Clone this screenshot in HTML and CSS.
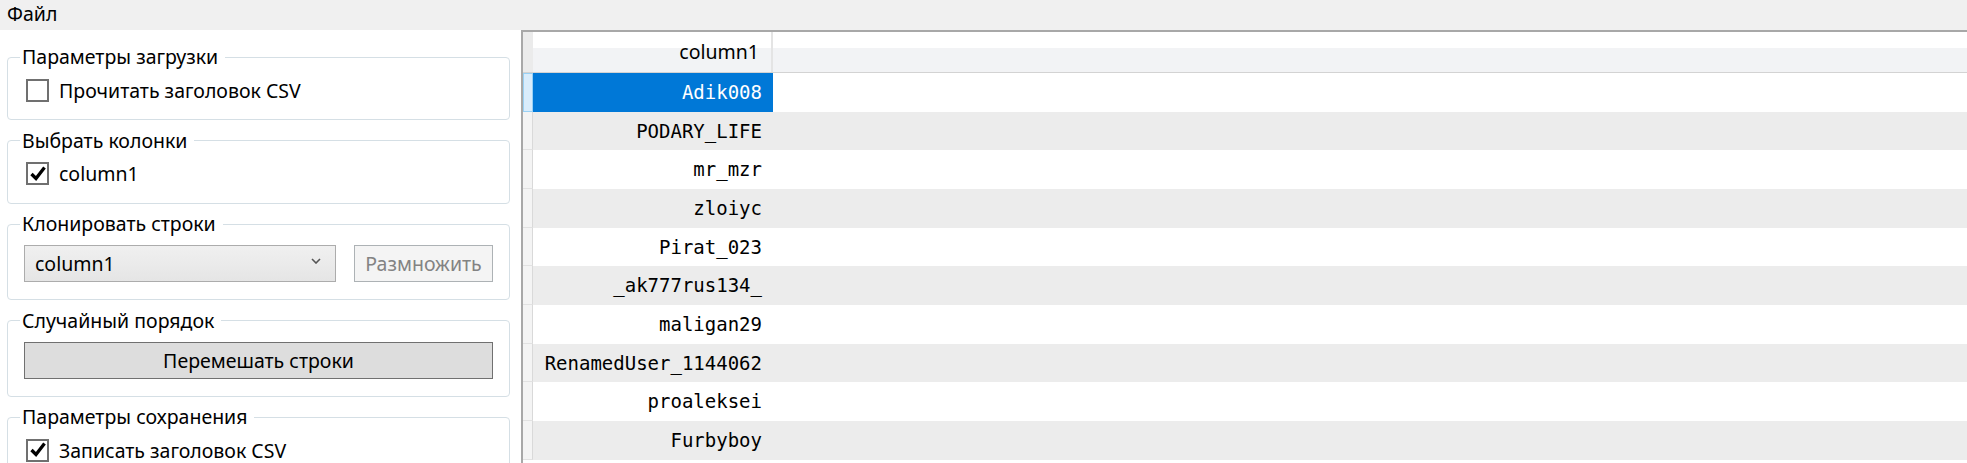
FILE: index.html
```html
<!DOCTYPE html>
<html lang="ru">
<head>
<meta charset="utf-8">
<title>CSV</title>
<link rel="stylesheet" href="styles.css">
</head>
<body>
<div class="menubar"><span class="menu-item">Файл</span></div>
<div class="main">
  <aside class="sidebar">
    <fieldset class="group">
      <legend>Параметры загрузки</legend>
      <label class="check"><span class="box"></span><span>Прочитать заголовок CSV</span></label>
    </fieldset>
    <fieldset class="group">
      <legend>Выбрать колонки</legend>
      <label class="check"><span class="box checked"><svg viewBox="0 0 18 18"><path d="M2.5 9 L7 13.5 L15.5 2.5" /></svg></span><span>column1</span></label>
    </fieldset>
    <fieldset class="group">
      <legend>Клонировать строки</legend>
      <div class="clone-row">
        <div class="combo"><span>column1</span><svg class="chev" viewBox="0 0 10 6"><path d="M1 1 L5 5 L9 1" /></svg></div>
        <button class="btn disabled" disabled>Размножить</button>
      </div>
    </fieldset>
    <fieldset class="group">
      <legend>Случайный порядок</legend>
      <button class="btn wide">Перемешать строки</button>
    </fieldset>
    <fieldset class="group">
      <legend>Параметры сохранения</legend>
      <label class="check"><span class="box checked"><svg viewBox="0 0 18 18"><path d="M2.5 9 L7 13.5 L15.5 2.5" /></svg></span><span>Записать заголовок CSV</span></label>
    </fieldset>
  </aside>
  <section class="grid">
    <div class="grid-head"><div class="corner"></div><div class="hcell">column1</div><div class="hfill"></div></div>
    <div class="row selected"><div class="rh"></div><div class="cell">Adik008</div><div class="fill"></div></div>
    <div class="row alt"><div class="rh"></div><div class="cell">PODARY_LIFE</div><div class="fill"></div></div>
    <div class="row"><div class="rh"></div><div class="cell">mr_mzr</div><div class="fill"></div></div>
    <div class="row alt"><div class="rh"></div><div class="cell">zloiyc</div><div class="fill"></div></div>
    <div class="row"><div class="rh"></div><div class="cell">Pirat_023</div><div class="fill"></div></div>
    <div class="row alt"><div class="rh"></div><div class="cell">_ak777rus134_</div><div class="fill"></div></div>
    <div class="row"><div class="rh"></div><div class="cell">maligan29</div><div class="fill"></div></div>
    <div class="row alt"><div class="rh"></div><div class="cell">RenamedUser_1144062</div><div class="fill"></div></div>
    <div class="row"><div class="rh"></div><div class="cell">proaleksei</div><div class="fill"></div></div>
    <div class="row alt"><div class="rh"></div><div class="cell">Furbyboy</div><div class="fill"></div></div>
  </section>
</div>
</body>
</html>
```

FILE: styles.css
```css
html, body {
  margin: 0;
  padding: 0;
  height: 100%;
  overflow: hidden;
  background: #ffffff;
  font-family: "Noto Sans", "Open Sans", sans-serif;
  font-size: 19.5px;
  color: #000;
}

.menubar {
  height: 30px;
  background: #f0f0f0;
  display: flex;
  align-items: center;
  padding-left: 7px;
  box-sizing: border-box;
}

.menu-item {
  line-height: 24px;
  margin-top: -2px;
}

.main {
  display: flex;
  height: 433px;
}

.sidebar {
  width: 521px;
  flex: none;
  box-sizing: border-box;
  padding: 15px 11px 0 7px;
  background: #fff;
}

.group {
  margin: 0 0 8.5px 0;
  padding: 9px 16px 17px 16px;
  border: 1px solid #d5dfe5;
  border-radius: 4px;
  min-width: 0;
}

.group legend {
  margin-left: -4px;
  padding: 0 7px 0 2px;
  line-height: 24px;
}

.check {
  display: flex;
  align-items: center;
  height: 24px;
  gap: 10px;
  padding-left: 2px;
}

.box {
  width: 23px;
  height: 23px;
  box-sizing: border-box;
  border: 2px solid #707070;
  background: #fff;
  display: flex;
  align-items: center;
  justify-content: center;
}

.box svg {
  width: 18px;
  height: 18px;
}

.box svg path {
  fill: none;
  stroke: #000;
  stroke-width: 3.3;
}

.clone-row {
  display: flex;
  gap: 18px;
}

.combo {
  width: 312px;
  height: 37px;
  box-sizing: border-box;
  border: 1px solid #acacac;
  background: linear-gradient(#f0f0f0, #e5e5e5);
  display: flex;
  align-items: center;
  justify-content: space-between;
  padding: 0 14px 0 10px;
}

.chev {
  width: 10px;
  height: 6px;
  margin-top: -6px;
}

.chev path {
  fill: none;
  stroke: #555;
  stroke-width: 1.6;
}

.btn {
  height: 37px;
  box-sizing: border-box;
  font: inherit;
  padding: 0;
  margin: 0;
}

.btn.disabled {
  width: 139px;
  border: 1px solid #adb2b5;
  background: #f4f4f4;
  color: #838383;
}

.btn.wide {
  width: 100%;
  border: 1px solid #707070;
  background: #dddddd;
  color: #000;
}

.grid {
  flex: 1;
  border-left: 2px solid #a8a8a8;
  border-top: 2px solid #a8a8a8;
  background: #fff;
  overflow: hidden;
}

.grid-head {
  display: flex;
  height: 41px;
  box-sizing: border-box;
  border-bottom: 1px solid #d3d3d3;
  background: linear-gradient(#ffffff 0 16px, #f2f3f5 16px);
}

.corner {
  width: 10px;
  background: #ebebeb;
  flex: none;
}

.hcell {
  width: 240px;
  flex: none;
  box-sizing: border-box;
  border-right: 2px solid #e4e4e4;
  text-align: right;
  padding-right: 12px;
  line-height: 40px;
}

.hfill {
  flex: 1;
}

.row {
  display: flex;
  height: 38.67px;
}

.row.alt {
  background: #ececec;
}

.rh {
  width: 10px;
  flex: none;
  box-sizing: border-box;
  background: #f4f4f4;
  border-right: 1px solid #d9d9d9;
  border-bottom: 1px solid #e2e2e2;
}

.row.selected .rh {
  background: #d9ecfb;
  border: 1px solid #99d1f5;
}

.cell {
  width: 240px;
  flex: none;
  box-sizing: border-box;
  text-align: right;
  padding-right: 11px;
  font-family: "DejaVu Sans Mono", "Liberation Mono", monospace;
  font-size: 19px;
  line-height: 38.67px;
  white-space: nowrap;
}

.row.selected .cell {
  background: #0078d7;
  color: #fff;
}

.fill {
  flex: 1;
}
```
